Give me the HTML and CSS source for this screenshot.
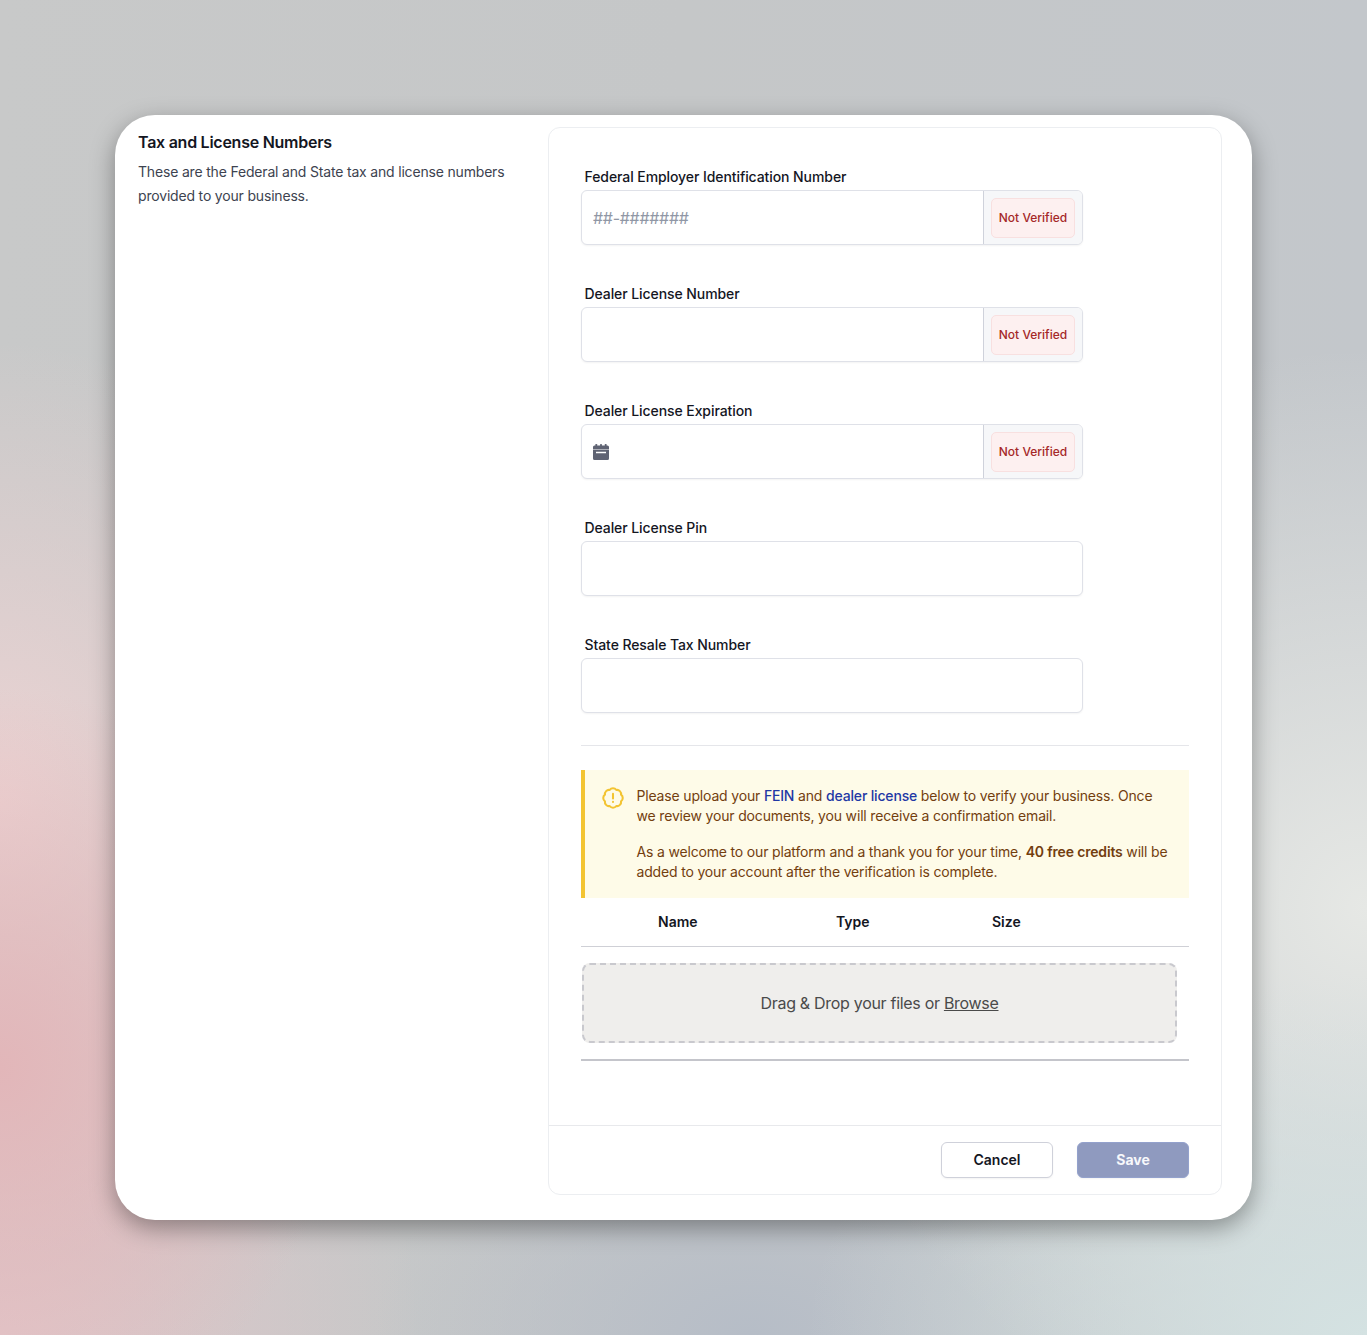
FILE: index.html
```html
<!DOCTYPE html>
<html lang="en">
<head>
  <meta charset="UTF-8" />
  <meta name="viewport" content="width=device-width, initial-scale=1.0" />
  <title>Tax and License Numbers</title>
  <link rel="stylesheet" href="styles.css">
</head>
<body>
  <div class="card">
    <div class="intro">
      <h2>Tax and License Numbers</h2>
      <p>These are the Federal and State tax and license numbers provided to your business.</p>
    </div>

    <form class="panel">
      <div class="panel-body">
        <div class="fields">
          <div class="field">
            <label for="fein">Federal Employer Identification Number</label>
            <div class="input-group">
              <input type="text" id="fein" placeholder="##-#######" />
              <div class="addon"><span class="badge">Not Verified</span></div>
            </div>
          </div>

          <div class="field">
            <label for="license">Dealer License Number</label>
            <div class="input-group">
              <input type="text" id="license" />
              <div class="addon"><span class="badge">Not Verified</span></div>
            </div>
          </div>

          <div class="field">
            <label for="expiration">Dealer License Expiration</label>
            <div class="input-group">
              <div class="date-icon">
                <svg width="18" height="18" viewBox="0 0 18 18" fill="#5f6373">
                  <rect x="3.4" y="1" width="1.8" height="3" rx="0.6" />
                  <rect x="8.1" y="1" width="1.8" height="3" rx="0.6" />
                  <rect x="12.8" y="1" width="1.8" height="3" rx="0.6" />
                  <path d="M2.5 2.5h13A1.5 1.5 0 0 1 17 4v2.500H1V4a1.500 1.500 0 0 1 1.500-1.500z" />
                  <path fill-rule="evenodd" d="M1 7h16v8.500a1.500 1.500 0 0 1-1.500 1.500h-13A1.500 1.500 0 0 1 1 15.500zm3 1.800v1.400h10V8.800z" />
                </svg>
              </div>
              <input type="text" id="expiration" class="with-icon" />
              <div class="addon"><span class="badge">Not Verified</span></div>
            </div>
          </div>

          <div class="field">
            <label for="pin">Dealer License Pin</label>
            <div class="input-group">
              <input type="text" id="pin" />
            </div>
          </div>

          <div class="field">
            <label for="resale">State Resale Tax Number</label>
            <div class="input-group">
              <input type="text" id="resale" />
            </div>
          </div>
        </div>

        <hr class="divider" />

        <div class="alert">
          <svg class="alert-icon" width="26" height="26" viewBox="0 0 24 24" fill="none" stroke="#f3c432" stroke-width="1.9" stroke-linecap="round" stroke-linejoin="round">
            <path d="M21 12c0 1.268-.63 2.39-1.593 3.068a3.745 3.745 0 01-1.043 3.296 3.746 3.746 0 01-3.296 1.043A3.745 3.745 0 0112 21c-1.268 0-2.39-.63-3.068-1.593a3.746 3.746 0 01-3.296-1.043 3.745 3.745 0 01-1.043-3.296A3.745 3.745 0 013 12c0-1.268.63-2.39 1.593-3.068a3.745 3.745 0 011.043-3.296 3.746 3.746 0 013.296-1.043A3.746 3.746 0 0112 3c1.268 0 2.39.63 3.068 1.593a3.746 3.746 0 013.296 1.043 3.746 3.746 0 011.043 3.296A3.745 3.745 0 0121 12z" />
            <path d="M12 8.200v4.300M12 15.600v.1" />
          </svg>
          <div class="alert-text">
            <p>Please upload your <a href="#">FEIN</a> and <a href="#">dealer license</a> below to verify your business. Once we review your documents, you will receive a confirmation email.</p>
            <p>As a welcome to our platform and a thank you for your time, <strong>40 free credits</strong> will be added to your account after the verification is complete.</p>
          </div>
        </div>

        <div class="files-head">
          <span>Name</span>
          <span>Type</span>
          <span>Size</span>
        </div>

        <div class="files-row">
          <div class="dropzone"><span>Drag &amp; Drop your files or <a href="#">Browse</a></span></div>
        </div>
      </div>

      <div class="panel-footer">
        <button type="button" class="btn">Cancel</button>
        <button type="button" class="btn btn-save">Save</button>
      </div>
    </form>
  </div>
</body>
</html>
```

FILE: styles.css
```css
* {
  box-sizing: border-box;
}

body {
  margin: 0;
  height: 1335px;
  padding: 115px 115px 0;
  font-family: "Inter", "Liberation Sans", sans-serif;
  color: #14161f;
  background:
    radial-gradient(ellipse 340px 380px at 0% 80%, #e2b6b9 0%, rgba(226, 182, 185, 0) 100%),
    radial-gradient(ellipse 380px 460px at 0% 60%, #ecd3d3 0%, rgba(236, 211, 211, 0) 100%),
    radial-gradient(ellipse 420px 420px at 0% 100%, #e2c6c9 0%, rgba(226, 198, 201, 0) 100%),
    radial-gradient(ellipse 560px 360px at 100% 100%, #d4e2e2 0%, rgba(212, 226, 226, 0) 100%),
    radial-gradient(ellipse 560px 560px at 100% 68%, #e6e8e5 0%, rgba(230, 232, 229, 0) 100%),
    radial-gradient(ellipse 380px 240px at 55% 100%, #b6bdc7 0%, rgba(182, 189, 199, 0) 100%),
    linear-gradient(90deg, #c8c9c9 0%, #c5c7c8 50%, #c3c7cb 100%);
}

.card {
  display: flex;
  width: 1137px;
  height: 1105px;
  padding: 12px 30px 25px 23px;
  background: white;
  border-radius: 40px;
  box-shadow: 0 8px 24px rgba(0, 0, 0, 0.36);
}

.intro {
  width: 410px;
  flex-shrink: 0;
}

.intro h2 {
  margin: 4px 0 0;
  font-size: 16px;
  line-height: 22px;
  font-weight: 600;
  letter-spacing: -0.26px;
}

.intro p {
  margin: 7px 0 0;
  font-size: 14px;
  line-height: 24px;
  letter-spacing: -0.18px;
  color: #3d4350;
}

.panel {
  flex: 1;
  display: flex;
  flex-direction: column;
  border: 1px solid #eceef1;
  border-radius: 12px;
}

.panel-body {
  flex: 1;
  padding: 39px 32px 0;
}

.fields {
  display: flex;
  flex-direction: column;
  gap: 39px;
}

.field label {
  display: block;
  padding-left: 3.5px;
  margin-bottom: 3px;
  font-size: 14px;
  line-height: 20px;
  font-weight: 500;
  letter-spacing: -0.08px;
}

.input-group {
  position: relative;
  display: flex;
  width: 502px;
  height: 55px;
  background: white;
  border: 1px solid #dfe1e8;
  border-radius: 6px;
  box-shadow: 0 1px 2px rgba(0, 0, 0, 0.05);
}

.input-group input {
  flex: 1;
  min-width: 0;
  padding: 0 11px;
  border: none;
  outline: none;
  background: none;
  font-family: inherit;
  font-size: 16px;
  letter-spacing: -0.3px;
}

.input-group input::placeholder {
  color: #9097a5;
}

.input-group input.with-icon {
  padding-left: 40px;
}

.date-icon {
  position: absolute;
  left: 10px;
  top: 18px;
  height: 18px;
}

.addon {
  display: flex;
  align-items: center;
  justify-content: center;
  width: 99px;
  background: #f6f7f9;
  border-left: 1px solid #cfd2db;
  border-radius: 0 5px 5px 0;
}

.badge {
  display: flex;
  align-items: center;
  width: 84px;
  height: 40px;
  justify-content: center;
  font-size: 12px;
  font-weight: 500;
  color: #a52828;
  background: #fdf0f0;
  border: 1px solid #f8e0e0;
  border-radius: 5px;
}

.divider {
  height: 1px;
  margin: 32px 0 24px;
  border: none;
  background: #e5e6ea;
}

.alert {
  display: flex;
  height: 128px;
  padding: 16px 16px 0 15px;
  background: #fefbe8;
  border-left: 4px solid #f3c432;
  font-size: 14px;
  line-height: 20px;
  letter-spacing: -0.17px;
  color: #733e0f;
}

.alert-icon {
  flex-shrink: 0;
  margin: -1px 10.5px 0 0;
}

.alert-text p {
  margin: 0 0 16px;
}

.alert-text a {
  color: #1f38a5;
  font-weight: 500;
  text-decoration: none;
}

.alert-text strong {
  font-weight: 600;
}

.files-head {
  display: grid;
  grid-template-columns: 178px 156px 1fr;
  align-items: center;
  height: 49px;
  padding: 0 0 2px 77px;
  border-bottom: 1px solid #cfd0d6;
  font-size: 14px;
  font-weight: 600;
}

.files-row {
  padding: 16px 12px 16px 1px;
  border-bottom: 2px solid #c4c5cb;
}

.dropzone {
  display: flex;
  align-items: center;
  justify-content: center;
  height: 80px;
  background: #efeeec;
  border: 2px dashed #c9c9ce;
  border-radius: 8px;
  font-size: 16px;
  letter-spacing: -0.3px;
  color: #4a4a4a;
}

.dropzone a {
  color: inherit;
}

.panel-footer {
  display: flex;
  justify-content: flex-end;
  gap: 24px;
  height: 69px;
  padding: 16px 32px;
  border-top: 1px solid #e8e9ec;
}

.btn {
  width: 112px;
  height: 36px;
  padding: 0 0 2px;
  background: white;
  border: 1px solid #cfd1da;
  border-radius: 6px;
  font-family: inherit;
  font-size: 14px;
  font-weight: 600;
  color: #14161f;
  box-shadow: 0 1px 2px rgba(0, 0, 0, 0.05);
}

.btn-save {
  background: #8f9abf;
  border-color: #93a1cc;
  font-weight: 700;
  color: #f7f8fb;
}
```
